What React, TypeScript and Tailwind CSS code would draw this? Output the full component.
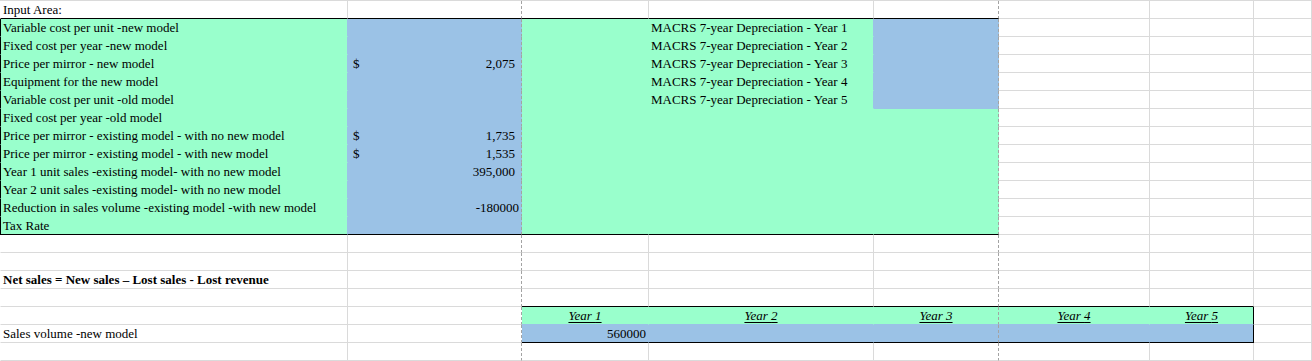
import React from "react";

const GREEN = "green";
const BLUE = "blue";

const labels: Record<number, string> = {
  0: "Input Area:",
  1: "Variable cost per unit -new model",
  2: "Fixed cost per year -new model",
  3: "Price per mirror - new model",
  4: "Equipment for the new model",
  5: "Variable cost per unit -old model",
  6: "Fixed cost per year -old model",
  7: "Price per mirror - existing model - with no new model",
  8: "Price per mirror - existing model - with new model",
  9: "Year 1 unit sales -existing model- with no new model",
  10: "Year 2 unit sales -existing model- with no new model",
  11: "Reduction in sales volume -existing model -with new model",
  12: "Tax Rate",
  15: "Net sales = New sales \u2013 Lost sales - Lost revenue",
  18: "Sales volume -new model",
};

// accounting values in column B
const money: Record<number, { sign?: boolean; v: string }> = {
  3: { sign: true, v: "2,075" },
  7: { sign: true, v: "1,735" },
  8: { sign: true, v: "1,535" },
  9: { v: "395,000" },
};

function fillOf(r: number, c: number): string | null {
  if (r >= 1 && r <= 12 && c <= 4) {
    if (c === 1) return BLUE;
    if (c === 4 && r <= 5) return BLUE;
    return GREEN;
  }
  if (r === 17 && c >= 2 && c <= 6) return GREEN;
  if (r === 18 && c >= 2 && c <= 6) return BLUE;
  return null;
}

function bottomClass(r: number, c: number, fill: string | null) {
  if ((r === 0 || r === 12) && c <= 4) return "border-b-black";
  if ((r === 16 || r === 18) && c >= 2 && c <= 6) return "border-b-black";
  if (fill === GREEN) {
    return fillOf(r + 1, c) === BLUE ? "border-b-[#9bc2e6]" : "border-b-[#99ffcc]";
  }
  if (fill === BLUE) return "border-b-[#9bc2e6]";
  return "border-b-[#dadada]";
}

function rightClass(r: number, c: number, fill: string | null) {
  if (c === 1 || c === 4) return "border-r-[#a3a3a3] [border-right-style:dashed]";
  if (c === 6 && (r === 17 || r === 18)) return "border-r-black";
  if (fill === GREEN) return fillOf(r, c + 1) === BLUE ? "border-r-[#9bc2e6]" : "border-r-[#99ffcc]";
  if (fill === BLUE) return "border-r-[#9bc2e6]";
  return "border-r-[#dadada]";
}

function CellText({ r, c }: { r: number; c: number }) {
  if (c === 0 && labels[r]) {
    return (
      <span className={`pl-[2px] ${r === 15 ? "font-bold" : ""}`}>{labels[r]}</span>
    );
  }
  if (c === 1 && money[r]) {
    return (
      <div className="flex w-full justify-between pl-[5px] pr-[6px]">
        <span>{money[r].sign ? "$" : ""}</span>
        <span>{money[r].v}</span>
      </div>
    );
  }
  if (c === 1 && r === 11) {
    return <span className="ml-auto pr-[2px]">-180000</span>;
  }
  if (c === 3 && r >= 1 && r <= 5) {
    return <span className="pl-[2px]">MACRS 7-year Depreciation - Year {r}</span>;
  }
  if (r === 17 && c >= 2 && c <= 6) {
    return <span className="mx-auto italic underline underline-offset-2">Year {c - 1}</span>;
  }
  if (r === 18 && c === 2) {
    return <span className="ml-auto pr-[2px]">560000</span>;
  }
  return null;
}

export default function App() {
  const rows = Array.from({ length: 20 }, (_, i) => i);
  const cols = Array.from({ length: 8 }, (_, i) => i);

  return (
    <div className="h-[361px] w-[1312px] overflow-hidden bg-white text-black font-['Liberation_Serif','Times_New_Roman',serif] text-[13px]">
      <div className="grid grid-cols-[348px_174px_127px_225px_125px_151px_104px_58px] border-t border-t-[#dadada]">
        {rows.map((r) =>
          cols.map((c) => {
            const fill = fillOf(r, c);
            const bg = fill === GREEN ? "bg-[#99ffcc]" : fill === BLUE ? "bg-[#9bc2e6]" : "bg-white";
            const left =
              c === 0 ? (r >= 1 && r <= 12 ? "border-l border-l-black" : "border-l border-l-white") : "";
            return (
              <div
                key={`${r}-${c}`}
                className={`flex h-[18px] items-end whitespace-nowrap border-b border-r pb-[1px] leading-[15px] ${bg} ${left} ${bottomClass(r, c, fill)} ${rightClass(r, c, fill)}`}
              >
                <CellText r={r} c={c} />
              </div>
            );
          })
        )}
      </div>
    </div>
  );
}
